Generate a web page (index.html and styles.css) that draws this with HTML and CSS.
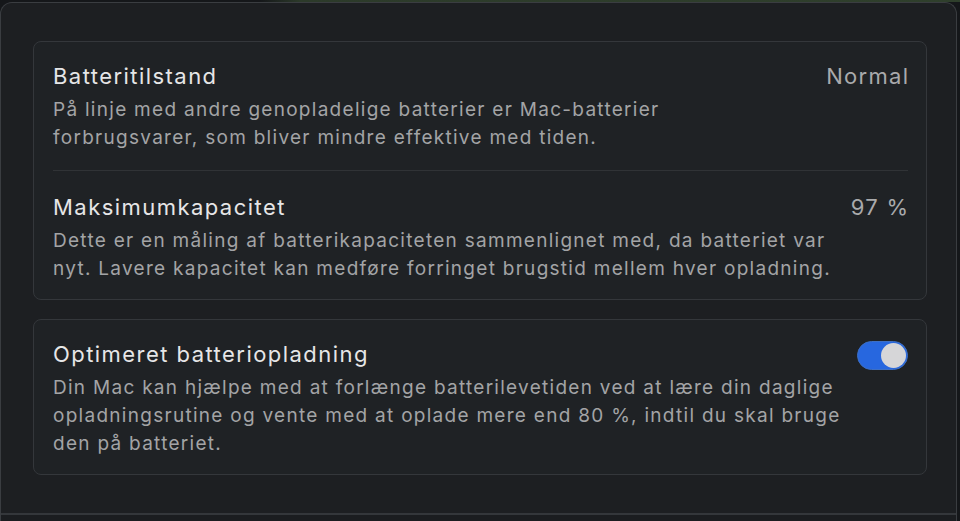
FILE: index.html
```html
<!DOCTYPE html>
<html lang="da">
<head>
<meta charset="utf-8">
<link rel="stylesheet" href="styles.css">
</head>
<body>
<div class="topstrip"></div>
<div class="window">
  <div class="content">
    <section class="card">
      <div class="row row-first">
        <div class="text">
          <div class="title">Batteritilstand</div>
          <div class="desc">På linje med andre genopladelige batterier er Mac-batterier<br>forbrugsvarer, som bliver mindre effektive med tiden.</div>
        </div>
        <div class="value">Normal</div>
      </div>
      <div class="divider"></div>
      <div class="row row-second">
        <div class="text">
          <div class="title">Maksimumkapacitet</div>
          <div class="desc">Dette er en måling af batterikapaciteten sammenlignet med, da batteriet var<br>nyt. Lavere kapacitet kan medføre forringet brugstid mellem hver opladning.</div>
        </div>
        <div class="value">97 %</div>
      </div>
    </section>
    <section class="card">
      <div class="row row-single">
        <div class="text">
          <div class="title">Optimeret batteriopladning</div>
          <div class="desc">Din Mac kan hjælpe med at forlænge batterilevetiden ved at lære din daglige<br>opladningsrutine og vente med at oplade mere end 80 %, indtil du skal bruge<br>den på batteriet.</div>
        </div>
        <div class="toggle"><span class="knob"></span></div>
      </div>
    </section>
  </div>
  <div class="footer"></div>
</div>
</body>
</html>
```
FILE: styles.css
```css
html, body {
  margin: 0;
  padding: 0;
  background: #15171a;
  height: 521px;
  overflow: hidden;
  font-family: Inter, "Open Sans", "Liberation Sans", sans-serif;
}
.topstrip {
  height: 2px;
  background: linear-gradient(to right, #15171a 0, #15171a 260px, #2c3a2a 300px, #2f3f2c 100%);
}
.window {
  width: 957px;
  height: 519px;
  box-sizing: border-box;
  border: 1px solid #3a3d41;
  border-bottom: none;
  border-radius: 12px 12px 0 0;
  background: #1d1f22;
  display: flex;
  flex-direction: column;
}
.content {
  flex: 1;
  padding: 38px 29px 0 32px;
  display: flex;
  flex-direction: column;
  gap: 19px;
}
.card {
  border: 1px solid #34373b;
  border-radius: 8px;
  background: #1f2225;
  padding: 0 18px 0 19px;
}
.row {
  display: flex;
  justify-content: space-between;
  align-items: flex-start;
}
.row-first {
  padding: 20px 0 18px;
}
.row-second {
  padding: 22px 0 16px;
}
.row-single {
  padding: 20px 0 16px;
}
.title {
  color: #e6e6e7;
  font-size: 22px;
  line-height: 28px;
  letter-spacing: 1.45px;
}
.desc {
  color: #a3a4a6;
  font-size: 19px;
  line-height: 28px;
  margin-top: 6px;
  letter-spacing: 1.28px;
}
.value {
  color: #a9aaac;
  font-size: 22px;
  line-height: 28px;
  letter-spacing: 1.3px;
  margin-right: -1.3px;
}
.divider {
  height: 1px;
  background: #303336;
}
.toggle {
  width: 51px;
  height: 29px;
  margin-top: 1px;
  border-radius: 15px;
  background: #2767df;
  box-sizing: border-box;
  border: 1px solid #3d6fc4;
  display: flex;
  justify-content: flex-end;
  align-items: center;
  padding: 1px;
  flex-shrink: 0;
}
.knob {
  width: 25px;
  height: 25px;
  border-radius: 50%;
  background: #d6d6d8;
}
.footer {
  height: 6px;
  border-top: 2px solid #34373b;
  background: #1b1d20;
}
```
